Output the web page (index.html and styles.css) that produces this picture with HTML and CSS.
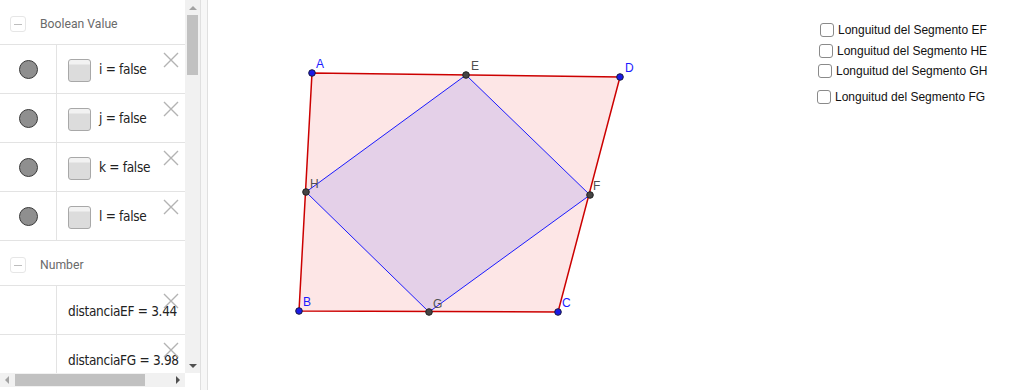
FILE: index.html
```html
<!DOCTYPE html>
<html>
<head>
<meta charset="utf-8">
<link rel="stylesheet" href="styles.css">
</head>
<body>
<div class="app">
  <div class="algebra">
    <div class="alg-main">
      <div class="alg-list">
        <div class="header"><span class="minus"></span><span class="htext">Boolean Value</span></div>
        <div class="row">
          <div class="marble-cell"><span class="marble"></span></div>
          <div class="content"><span class="cb"></span><span class="expr">i = false</span></div>
          <svg class="del" viewBox="0 0 16 16"><path d="M1 1L15 15M15 1L1 15"/></svg>
        </div>
        <div class="row">
          <div class="marble-cell"><span class="marble"></span></div>
          <div class="content"><span class="cb"></span><span class="expr">j = false</span></div>
          <svg class="del" viewBox="0 0 16 16"><path d="M1 1L15 15M15 1L1 15"/></svg>
        </div>
        <div class="row">
          <div class="marble-cell"><span class="marble"></span></div>
          <div class="content"><span class="cb"></span><span class="expr">k = false</span></div>
          <svg class="del" viewBox="0 0 16 16"><path d="M1 1L15 15M15 1L1 15"/></svg>
        </div>
        <div class="row">
          <div class="marble-cell"><span class="marble"></span></div>
          <div class="content"><span class="cb"></span><span class="expr">l = false</span></div>
          <svg class="del" viewBox="0 0 16 16"><path d="M1 1L15 15M15 1L1 15"/></svg>
        </div>
        <div class="header"><span class="minus"></span><span class="htext">Number</span></div>
        <div class="row">
          <div class="marble-cell"></div>
          <div class="content num"><span class="expr">distanciaEF = 3.44</span></div>
          <svg class="del" viewBox="0 0 16 16"><path d="M1 1L15 15M15 1L1 15"/></svg>
        </div>
        <div class="row">
          <div class="marble-cell"></div>
          <div class="content num"><span class="expr">distanciaFG = 3.98</span></div>
          <svg class="del" viewBox="0 0 16 16"><path d="M1 1L15 15M15 1L1 15"/></svg>
        </div>
      </div>
      <div class="vscroll">
        <span class="arrow-up"></span>
        <span class="vthumb"></span>
        <span class="vspace"></span>
        <span class="arrow-down"></span>
      </div>
    </div>
    <div class="hscroll-row">
      <div class="hscroll">
        <span class="arrow-left"></span>
        <span class="hthumb"></span>
        <span class="hspace"></span>
        <span class="arrow-right"></span>
      </div>
      <div class="corner"></div>
    </div>
  </div>
  <div class="divider"></div>
  <div class="graphics">
    <svg class="canvas" viewBox="208 0 816 390" width="816" height="390">
      <polygon points="312,73 620,77 558,312 299,311" fill="#fde6e6" stroke="#cc0000" stroke-width="1.5"/>
      <polygon points="466,75 590,195 429,312 306,192" fill="#e4d0e8" stroke="#1a1aff" stroke-width="1"/>
      <g fill="#1a1ae6" stroke="#1a1a40" stroke-width="1">
        <circle cx="312" cy="73" r="3.3"/>
        <circle cx="620" cy="77" r="3.3"/>
        <circle cx="558" cy="312" r="3.3"/>
        <circle cx="299" cy="311" r="3.3"/>
      </g>
      <g fill="#444" stroke="#222" stroke-width="1">
        <circle cx="466" cy="75" r="3.3"/>
        <circle cx="590" cy="195" r="3.3"/>
        <circle cx="429" cy="312" r="3.3"/>
        <circle cx="306" cy="192" r="3.3"/>
      </g>
      <g class="lbl blue">
        <text x="316" y="68">A</text>
        <text x="625" y="72">D</text>
        <text x="303" y="306">B</text>
        <text x="562" y="307">C</text>
      </g>
      <g class="lbl gray">
        <text x="471" y="70">E</text>
        <text x="593" y="190">F</text>
        <text x="433" y="308">G</text>
        <text x="310" y="188">H</text>
      </g>
    </svg>
    <label class="chk c1"><span class="box"></span>Longuitud del Segmento EF</label>
    <label class="chk c2"><span class="box"></span>Longuitud del Segmento HE</label>
    <label class="chk c3"><span class="box"></span>Longuitud del Segmento GH</label>
    <label class="chk c4"><span class="box"></span>Longuitud del Segmento FG</label>
  </div>
</div>
</body>
</html>
```
FILE: styles.css
```css
html, body {
  margin: 0;
  padding: 0;
  background: #fff;
}
body {
  width: 1024px;
  height: 390px;
  overflow: hidden;
  font-family: "Liberation Sans", Arial, sans-serif;
}
.app {
  display: flex;
  width: 1024px;
  height: 390px;
}
.algebra {
  width: 200px;
  height: 390px;
  display: flex;
  flex-direction: column;
  flex: none;
}
.alg-main {
  display: flex;
  height: 373px;
}
.alg-list {
  width: 185px;
  height: 373px;
  overflow: hidden;
  flex: none;
}
.header {
  display: flex;
  align-items: center;
  height: 45px;
  padding-top: 4px;
  border-bottom: 1px solid #e3e3e3;
  box-sizing: border-box;
}
.minus {
  width: 14px;
  height: 14px;
  margin-left: 10px;
  border: 1px solid #e6e6e6;
  border-radius: 3px;
  position: relative;
  box-sizing: content-box;
}
.minus::after {
  content: "";
  position: absolute;
  left: 3px;
  right: 3px;
  top: 7px;
  height: 1px;
  background: #bdbdbd;
}
.htext {
  margin-left: 14px;
  font-family: "Roboto", sans-serif;
  font-size: 12.2px;
  color: #6a6a6a;
}
.row {
  display: flex;
  height: 49px;
  border-bottom: 1px solid #e3e3e3;
  box-sizing: border-box;
  position: relative;
}
.marble-cell {
  width: 56px;
  flex: none;
  display: flex;
  align-items: center;
  justify-content: center;
  border-right: 1px solid #e3e3e3;
}
.marble {
  width: 17px;
  height: 17px;
  border-radius: 50%;
  background: #8f8f8f;
  border: 1px solid #3a3a3a;
  margin-left: 1px;
}
.content {
  flex: 1;
  display: flex;
  align-items: center;
  padding-left: 11px;
  overflow: hidden;
  white-space: nowrap;
}
.content.num { padding-top: 2px; }
.cb {
  width: 21px;
  height: 21px;
  border: 1px solid #a8a8a8;
  border-radius: 3px;
  background: linear-gradient(#f2f2f2 0, #f2f2f2 4px, #dcdcdc 5px, #dcdcdc 100%);
  flex: none;
  margin-top: 2px;
}
.expr {
  margin-left: 8px;
  font-family: "DejaVu Sans Condensed", "DejaVu Sans", sans-serif;
  font-size: 13.5px;
  color: #222;
  letter-spacing: -0.3px;
}
.content.num .expr { margin-left: 0; }
.del {
  position: absolute;
  left: 163px;
  top: 7px;
  width: 16px;
  height: 16px;
  fill: none;
  stroke: #b3b3b3;
  stroke-width: 1.4;
}
.vscroll {
  width: 15px;
  height: 373px;
  background: #f1f1f1;
  display: flex;
  flex-direction: column;
  align-items: center;
}
.arrow-up {
  margin-top: 6px;
  width: 0; height: 0;
  border-left: 4px solid transparent;
  border-right: 4px solid transparent;
  border-bottom: 4px solid #a3a3a3;
}
.vthumb {
  margin-top: 5px;
  width: 11px;
  height: 60px;
  background: #c1c1c1;
}
.vspace { flex: 1; }
.arrow-down {
  margin-bottom: 5px;
  width: 0; height: 0;
  border-left: 4px solid transparent;
  border-right: 4px solid transparent;
  border-top: 4px solid #505050;
}
.hscroll-row {
  display: flex;
  height: 17px;
}
.hscroll {
  width: 185px;
  height: 14px;
  background: #f1f1f1;
  display: flex;
  align-items: center;
}
.arrow-left {
  margin-left: 5px;
  width: 0; height: 0;
  border-top: 4px solid transparent;
  border-bottom: 4px solid transparent;
  border-right: 4px solid #a3a3a3;
}
.hthumb {
  margin-left: 6px;
  width: 130px;
  height: 12px;
  background: #c1c1c1;
}
.hspace { flex: 1; }
.arrow-right {
  margin-right: 5px;
  width: 0; height: 0;
  border-top: 4px solid transparent;
  border-bottom: 4px solid transparent;
  border-left: 4px solid #505050;
}
.corner { flex: 1; }
.divider {
  width: 6px;
  flex: none;
  border-left: 1px solid #e0e0e0;
  border-right: 1px solid #e0e0e0;
  background: #f7f7f7;
}
.graphics {
  flex: 1;
  position: relative;
  overflow: hidden;
}
.canvas {
  position: absolute;
  left: 0;
  top: 0;
}
.lbl text {
  font-family: "Liberation Sans", Arial, sans-serif;
  font-size: 12px;
}
.lbl.blue { fill: #1a1aff; }
.lbl.gray { fill: #505050; }
.chk {
  position: absolute;
  display: flex;
  align-items: center;
  font-size: 12px;
  color: #111;
  white-space: nowrap;
}
.box {
  width: 12px;
  height: 12px;
  border: 1px solid #8a8a8a;
  border-radius: 3px;
  background: #fff;
  margin-right: 4px;
}
.c1 { left: 612px; top: 23px; }
.c2 { left: 611px; top: 44px; }
.c3 { left: 610px; top: 64px; }
.c4 { left: 609px; top: 90px; }
```
